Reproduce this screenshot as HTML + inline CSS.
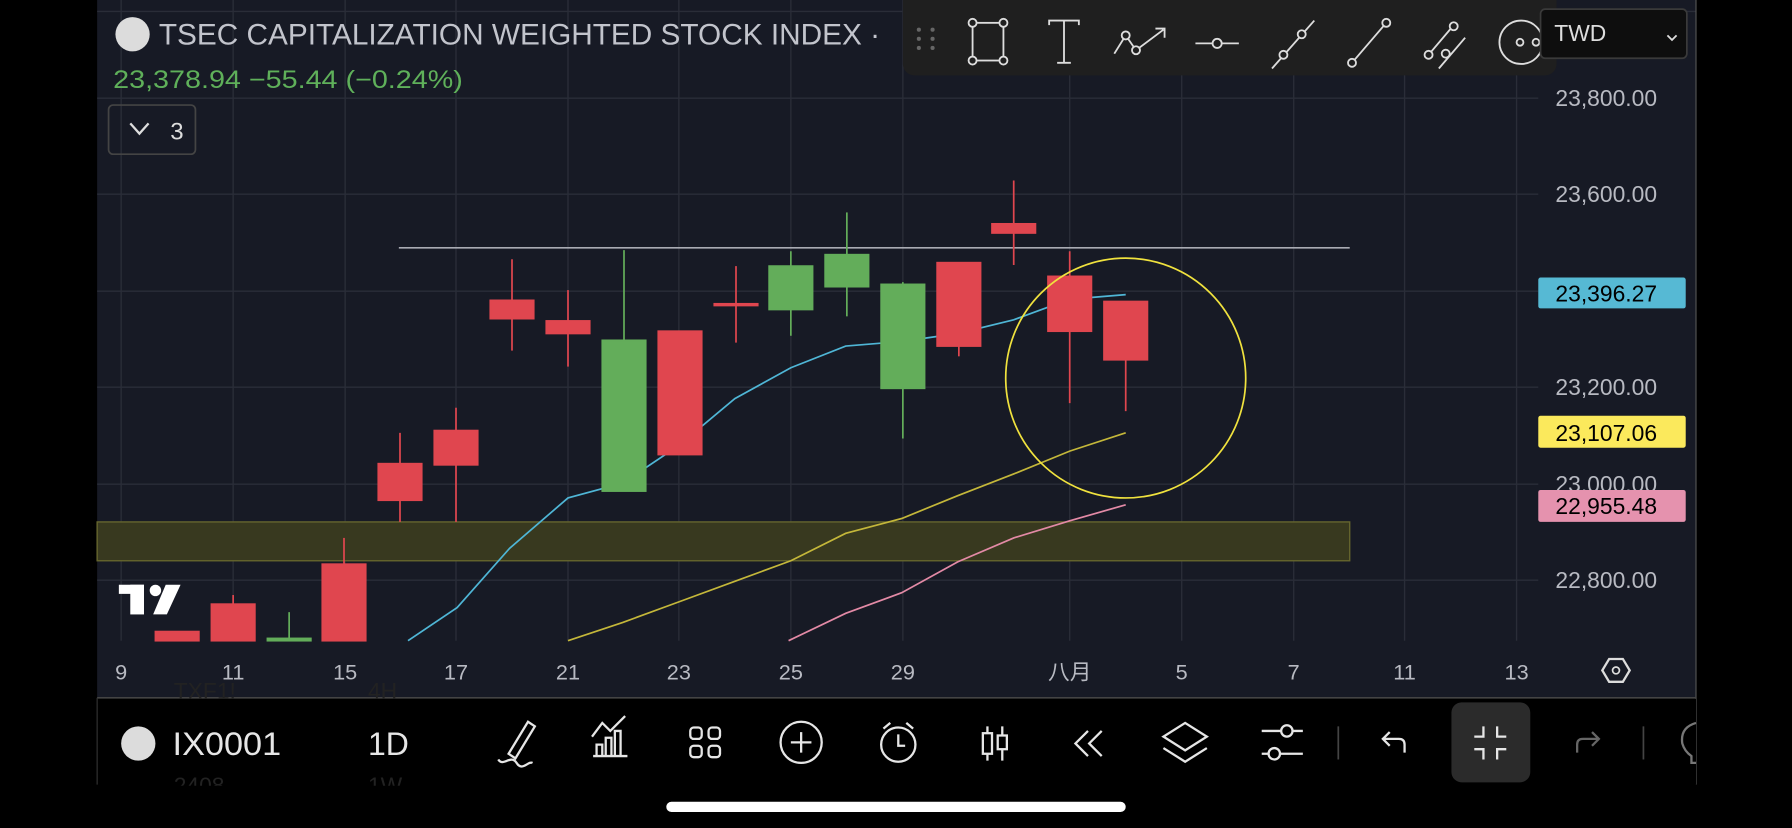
<!DOCTYPE html>
<html><head><meta charset="utf-8"><style>
html,body{margin:0;padding:0;background:#000;width:1792px;height:828px;overflow:hidden}
svg{display:block}
text{font-family:"Liberation Sans","Noto Sans CJK SC",sans-serif}
</style></head><body>
<svg width="1792" height="828" viewBox="0 0 1568 725" preserveAspectRatio="none" xmlns="http://www.w3.org/2000/svg">
<rect width="1568" height="725" fill="#000"/>
<rect x="85" y="0" width="1399" height="611" fill="#171a25"/>
<g stroke="#2a2d38" stroke-width="1.2">
<line x1="85" y1="10" x2="1484" y2="10"/>
<line x1="85" y1="86" x2="1346" y2="86"/><line x1="85" y1="170" x2="1346" y2="170"/>
<line x1="85" y1="255" x2="1346" y2="255"/><line x1="85" y1="339" x2="1346" y2="339"/>
<line x1="85" y1="424" x2="1346" y2="424"/><line x1="85" y1="508" x2="1346" y2="508"/>
<line x1="106" y1="0" x2="106" y2="561"/><line x1="204" y1="0" x2="204" y2="561"/>
<line x1="302" y1="0" x2="302" y2="561"/><line x1="399" y1="0" x2="399" y2="561"/>
<line x1="497" y1="0" x2="497" y2="561"/><line x1="594" y1="0" x2="594" y2="561"/>
<line x1="692" y1="0" x2="692" y2="561"/><line x1="790" y1="0" x2="790" y2="561"/>
<line x1="936" y1="0" x2="936" y2="561"/><line x1="1034" y1="0" x2="1034" y2="561"/>
<line x1="1132" y1="0" x2="1132" y2="561"/><line x1="1229" y1="0" x2="1229" y2="561"/>
<line x1="1327" y1="0" x2="1327" y2="561"/>
</g>
<line x1="1484" y1="0" x2="1484" y2="687" stroke="#555" stroke-width="1"/>
<line x1="85" y1="611" x2="1484" y2="611" stroke="#444" stroke-width="1.5"/>
<line x1="85" y1="611" x2="85" y2="687" stroke="#333"/>
<rect x="85" y="457" width="1096" height="34" fill="#38391f" stroke="#66662e" stroke-width="1.2"/>
<line x1="349" y1="217" x2="1181" y2="217" stroke="#a9abb3" stroke-width="1.5"/>
<polyline fill="none" stroke="#4fb6d6" stroke-width="1.5" points="357,561 400,532 446,480 497,436 545,423 594,390 643,349 692,322 740,303 789,299 838,292 887,280 936,262 985,258"/>
<polyline fill="none" stroke="#c4b73a" stroke-width="1.5" points="497,561 545,545 594,527 643,509 692,491 740,467 789,454 838,434 887,415 936,395 985,379"/>
<polyline fill="none" stroke="#e38aa6" stroke-width="1.5" points="690,561 740,537 789,519 838,492 887,471 936,456 985,442"/>
<g stroke-width="1.5">
<g fill="#e0464f" stroke="#e0464f">
<rect x="136" y="553" width="38" height="8"/>
<line x1="204" y1="521" x2="204" y2="529"/><rect x="185" y="529" width="38" height="32"/>
<line x1="301" y1="471" x2="301" y2="494"/><rect x="282" y="494" width="38" height="67"/>
<line x1="350" y1="379" x2="350" y2="457"/><rect x="331" y="406" width="38" height="32"/>
<line x1="399" y1="357" x2="399" y2="457"/><rect x="380" y="377" width="38" height="30"/>
<line x1="448" y1="227" x2="448" y2="307"/><rect x="429" y="263" width="38" height="16"/>
<line x1="497" y1="254" x2="497" y2="321"/><rect x="478" y="281" width="38" height="11"/>
<rect x="576" y="290" width="38" height="108"/>
<line x1="644" y1="233" x2="644" y2="300"/><rect x="625" y="266" width="38" height="1.5"/>
<line x1="839" y1="230" x2="839" y2="312"/><rect x="820" y="230" width="38" height="73"/>
<line x1="887" y1="158" x2="887" y2="232"/><rect x="868" y="196" width="38" height="8"/>
<line x1="936" y1="220" x2="936" y2="353"/><rect x="917" y="242" width="38" height="48"/>
<line x1="985" y1="315" x2="985" y2="360"/><rect x="966" y="264" width="38" height="51"/>
</g>
<g fill="#63ad5a" stroke="#63ad5a">
<line x1="253" y1="536" x2="253" y2="560"/><rect x="234" y="559" width="38" height="2"/>
<line x1="546" y1="219" x2="546" y2="430"/><rect x="527" y="298" width="38" height="132"/>
<line x1="692" y1="220" x2="692" y2="294"/><rect x="673" y="233" width="38" height="38"/>
<line x1="741" y1="186" x2="741" y2="277"/><rect x="722" y="223" width="38" height="28"/>
<line x1="790" y1="247" x2="790" y2="384"/><rect x="771" y="249" width="38" height="91"/>
</g>
</g>
<circle cx="985" cy="331" r="105" fill="none" stroke="#f0e23e" stroke-width="1.5"/>
<g fill="#fff"><rect x="104" y="512" width="22" height="8"/><rect x="114" y="512" width="12" height="26"/><circle cx="136" cy="517" r="5"/><polygon points="145,512 158,512 146,538 134,538"/></g>
<g fill="#b8bac2" font-size="20">
<text x="1361" y="93">23,800.00</text><text x="1361" y="177">23,600.00</text>
<text x="1361" y="346">23,200.00</text><text x="1361" y="431">23,000.00</text>
<text x="1361" y="515">22,800.00</text>
</g>
<rect x="1346" y="243" width="129" height="27" rx="2" fill="#56b9d4"/>
<text x="1361" y="264" font-size="20" fill="#000">23,396.27</text>
<rect x="1346" y="364" width="129" height="28" rx="2" fill="#fbe95c"/>
<text x="1361" y="386" font-size="20" fill="#000">23,107.06</text>
<rect x="1346" y="429" width="129" height="28" rx="2" fill="#e592ae"/>
<text x="1361" y="450" font-size="20" fill="#000">22,955.48</text>
<g fill="#b8bac2" font-size="19" text-anchor="middle">
<text x="106" y="595">9</text><text x="204" y="595">11</text><text x="302" y="595">15</text>
<text x="399" y="595">17</text><text x="497" y="595">21</text><text x="594" y="595">23</text>
<text x="692" y="595">25</text><text x="790" y="595">29</text><text x="936" y="595">八月</text>
<text x="1034" y="595">5</text><text x="1132" y="595">7</text><text x="1229" y="595">11</text>
<text x="1327" y="595">13</text>
</g>
<polygon points="1408,577 1420,577 1426,587 1420,597 1408,597 1402,587" fill="none" stroke="#ddd" stroke-width="2"/>
<circle cx="1414" cy="587" r="3" fill="none" stroke="#ddd" stroke-width="1.5"/>
<circle cx="116" cy="30" r="15" fill="#dcdcdc"/>
<text x="139" y="39" font-size="26" fill="#c2c4cc" textLength="631" lengthAdjust="spacingAndGlyphs">TSEC CAPITALIZATION WEIGHTED STOCK INDEX ·</text>
<text x="99" y="77" font-size="22" fill="#5fb05a" textLength="306" lengthAdjust="spacingAndGlyphs">23,378.94  −55.44 (−0.24%)</text>
<rect x="95" y="92" width="76" height="43" rx="4" fill="none" stroke="#444" stroke-width="1.5"/>
<polyline points="114,108 122,117 130,108" fill="none" stroke="#ddd" stroke-width="2"/>
<text x="149" y="122" font-size="21" fill="#ddd">3</text>
<rect x="790" y="-10" width="572" height="76" rx="10" fill="#1f1f1f"/>
<g fill="#666"><circle cx="804" cy="26" r="1.8"/><circle cx="816" cy="26" r="1.8"/><circle cx="804" cy="34" r="1.8"/><circle cx="816" cy="34" r="1.8"/><circle cx="804" cy="42" r="1.8"/><circle cx="816" cy="42" r="1.8"/></g>
<g fill="none" stroke="#ddd" stroke-width="1.6">
<rect x="851" y="20" width="27" height="33"/>
<circle cx="851" cy="20" r="3.5" fill="#1f1f1f"/><circle cx="878" cy="20" r="3.5" fill="#1f1f1f"/><circle cx="851" cy="53" r="3.5" fill="#1f1f1f"/><circle cx="878" cy="53" r="3.5" fill="#1f1f1f"/>
<path d="M918,22 V18 H944 V22 M931,18 V55 M925,55 H937"/>
<path d="M975,47 L985,31 L994,44 L1018,26 M1011,25 H1019 V33"/>
<circle cx="985" cy="31" r="3.5" fill="#1f1f1f"/><circle cx="994" cy="44" r="3.5" fill="#1f1f1f"/>
<path d="M1046,38 H1084"/><circle cx="1065" cy="38" r="4" fill="#1f1f1f"/>
<path d="M1113,60 L1150,18"/><circle cx="1123" cy="48" r="3.5" fill="#1f1f1f"/><circle cx="1139" cy="30" r="3.5" fill="#1f1f1f"/>
<path d="M1183,55 L1213,20"/><circle cx="1183" cy="55" r="3.5" fill="#1f1f1f"/><circle cx="1213" cy="20" r="3.5" fill="#1f1f1f"/>
<path d="M1250,48 L1272,22 M1259,60 L1282,33"/><circle cx="1250" cy="48" r="3.5" fill="#1f1f1f"/><circle cx="1272" cy="23" r="3.5" fill="#1f1f1f"/><circle cx="1265" cy="47" r="3.5" fill="#1f1f1f"/>
<circle cx="1331" cy="37" r="19"/><circle cx="1330" cy="37" r="3"/><circle cx="1344" cy="37" r="3" fill="#1f1f1f"/>
</g>
<rect x="1348" y="8" width="128" height="43" rx="4" fill="#0e0e0e" stroke="#3a3a3a" stroke-width="1.5"/>
<text x="1360" y="36" font-size="20" fill="#ddd">TWD</text>
<polyline points="1459,31 1463,35 1467,31" fill="none" stroke="#ddd" stroke-width="1.6"/>
<rect x="86" y="612" width="1398" height="75" fill="#000"/>
<text x="152" y="612" font-size="20" fill="#222">TXF1!</text>
<text x="322" y="612" font-size="20" fill="#222">4H</text>
<text x="152" y="695" font-size="20" fill="#222">2408</text>
<text x="322" y="695" font-size="20" fill="#222">1W</text>
<rect x="86" y="688" width="1398" height="37" fill="#000"/>
<circle cx="121" cy="651" r="15" fill="#dcdcdc"/>
<text x="151" y="661" font-size="28" fill="#e6e6e6" textLength="95" lengthAdjust="spacingAndGlyphs">IX0001</text>
<text x="322" y="661" font-size="28" fill="#e6e6e6">1D</text>
<g fill="none" stroke="#e6e6e6" stroke-width="2">
<path d="M445,660 L462,632 L468,636 L451,664 Z M436,665 C440,672 447,660 452,668 S462,666 466,668"/>
<path d="M519,662 H549 M522,661 V652 H527 V661 M530,661 V646 H535 V661 M538,661 V640 H543 V661 M518,645 L527,633 L534,640 L547,627"/>
<rect x="604" y="637" width="10" height="10" rx="3"/><rect x="620" y="637" width="10" height="10" rx="3"/><rect x="604" y="653" width="10" height="10" rx="3"/><rect x="620" y="653" width="10" height="10" rx="3"/>
<circle cx="701" cy="650" r="18"/><path d="M701,641 V659 M692,650 H710"/>
<circle cx="786" cy="652" r="15"/><path d="M786,643 V653 H792 M773,638 L779,633 M799,638 L793,633"/>
<path d="M864,636 V666 M877,636 V666"/><rect x="860" y="642" width="8" height="18" fill="#000"/><rect x="873" y="644" width="8" height="12" fill="#000"/>
<path d="M952,640 L941,651 L952,662 M964,640 L953,651 L964,662"/>
<path d="M1037,633 L1056,645 L1037,657 L1018,645 Z M1018,655 L1037,667 L1056,655"/>
<path d="M1104,640 H1140 M1104,660 H1140"/><circle cx="1126" cy="640" r="5" fill="#000"/><circle cx="1115" cy="660" r="5" fill="#000"/>
</g>
<line x1="1171" y1="636" x2="1171" y2="665" stroke="#444" stroke-width="1.5"/>
<path d="M1229,659 V652 Q1229,647 1224,647 H1211 M1216,641 L1210,647 L1216,653" fill="none" stroke="#e6e6e6" stroke-width="2"/>
<rect x="1270" y="615" width="69" height="70" rx="9" fill="#2b2b2b"/>
<path d="M1298,636 V645 H1290 M1310,636 V645 H1318 M1298,665 V656 H1290 M1310,665 V656 H1318" fill="none" stroke="#e6e6e6" stroke-width="2"/>
<path d="M1380,659 V652 Q1380,647 1385,647 H1398 M1393,641 L1399,647 L1393,653" fill="none" stroke="#666" stroke-width="2"/>
<line x1="1438" y1="636" x2="1438" y2="665" stroke="#444" stroke-width="1.5"/>
<path d="M1484,633 Q1470,637 1472,651 Q1474,658 1480,662 V668 H1484" fill="none" stroke="#777" stroke-width="2"/>
<rect x="583" y="702" width="402" height="9" rx="4.5" fill="#fff"/>
</svg>
</body></html>
